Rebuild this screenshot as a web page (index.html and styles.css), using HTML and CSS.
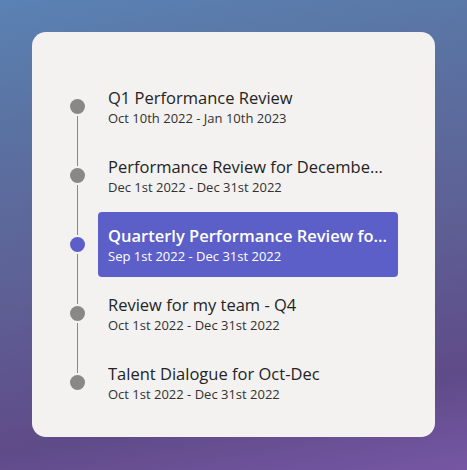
FILE: index.html
```html
<!DOCTYPE html>
<html>
<head>
<meta charset="utf-8">
<link rel="stylesheet" href="styles.css">
</head>
<body>
<div class="card">
  <ul class="timeline">
    <li class="row first">
      <div class="rail"><span class="seg"></span><span class="dot"></span><span class="seg"></span></div>
      <div class="item">
        <div class="title">Q1 Performance Review</div>
        <div class="sub">Oct 10th 2022 - Jan 10th 2023</div>
      </div>
    </li>
    <li class="row">
      <div class="rail"><span class="seg"></span><span class="dot"></span><span class="seg"></span></div>
      <div class="item">
        <div class="title">Performance Review for December 2022 Team Goals</div>
        <div class="sub">Dec 1st 2022 - Dec 31st 2022</div>
      </div>
    </li>
    <li class="row active">
      <div class="rail"><span class="seg"></span><span class="dot"></span><span class="seg"></span></div>
      <div class="item">
        <div class="title">Quarterly Performance Review for Q4 2022</div>
        <div class="sub">Sep 1st 2022 - Dec 31st 2022</div>
      </div>
    </li>
    <li class="row">
      <div class="rail"><span class="seg"></span><span class="dot"></span><span class="seg"></span></div>
      <div class="item">
        <div class="title">Review for my team - Q4</div>
        <div class="sub">Oct 1st 2022 - Dec 31st 2022</div>
      </div>
    </li>
    <li class="row last">
      <div class="rail"><span class="seg"></span><span class="dot"></span><span class="seg"></span></div>
      <div class="item">
        <div class="title">Talent Dialogue for Oct-Dec</div>
        <div class="sub">Oct 1st 2022 - Dec 31st 2022</div>
      </div>
    </li>
  </ul>
</div>
</body>
</html>
```
FILE: styles.css
```css
html, body {
  margin: 0;
  height: 100%;
}
body {
  padding: 32px;
  box-sizing: border-box;
  font-family: "Open Sans", "Noto Sans", sans-serif;
  background: linear-gradient(170deg, #5a82b4 0%, #5a73a2 22%, #5e5f94 55%, #5f4b88 82%, #7656a4 100%);
}
.card {
  width: 403px;
  height: 405px;
  box-sizing: border-box;
  background: #f3f2f1;
  border-radius: 14px;
  padding: 40px 37px 20px 38px;
}
.timeline {
  list-style: none;
  margin: 0;
  padding: 0;
  display: flex;
  flex-direction: column;
}
.row {
  display: flex;
  align-items: stretch;
  height: 69px;
  gap: 13px;
}
.rail {
  width: 15px;
  flex: none;
  display: flex;
  flex-direction: column;
  align-items: center;
  gap: 2px;
}
.seg {
  flex: 1;
  width: 1px;
  background: #8a8886;
}
.first .seg:first-child,
.last .seg:last-child {
  visibility: hidden;
}
.dot {
  width: 15px;
  height: 15px;
  border-radius: 50%;
  background: #8a8886;
  flex: none;
}
.item {
  width: 300px;
  box-sizing: border-box;
  margin: 2px 0;
  padding: 0 10px;
  border-radius: 4px;
  display: flex;
  flex-direction: column;
  justify-content: center;
  min-width: 0;
}
.title {
  font-size: 16.5px;
  line-height: 22px;
  color: #242424;
  white-space: nowrap;
  overflow: hidden;
  text-overflow: ellipsis;
}
.sub {
  font-size: 13px;
  line-height: 18px;
  color: #323130;
  white-space: nowrap;
}
.active .item {
  background: #5b5fc7;
}
.active .dot {
  background: #5b5fc7;
}
.active .title {
  color: #ffffff;
  font-weight: 600;
}
.active .sub {
  color: #ffffff;
}
```
